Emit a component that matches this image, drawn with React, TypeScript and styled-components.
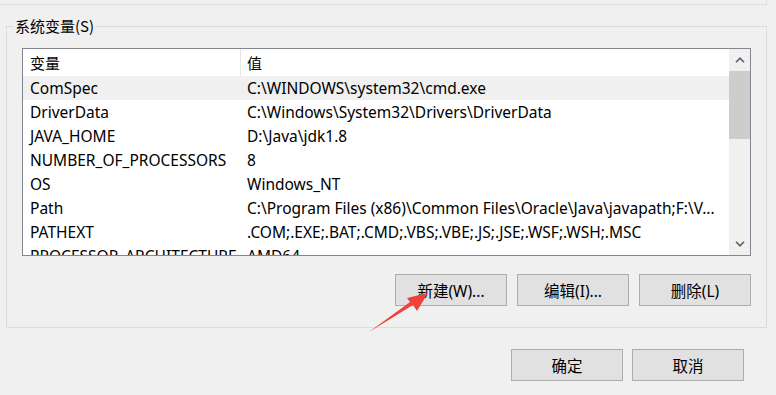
import React from 'react';
import styled, { createGlobalStyle } from 'styled-components';

const GlobalStyle = createGlobalStyle`
  html, body { margin: 0; padding: 0; background: #f0f0f0; }
  body { font-family: "Noto Sans", "Noto Sans CJK SC", sans-serif; }
  * { box-sizing: border-box; }
`;

const Page = styled.div`
  position: relative;
  width: 776px;
  height: 395px;
  overflow: hidden;
  background: #f0f0f0;
  display: flex;
  flex-direction: column;
  font-size: 15.5px;
  color: #000;
`;

const PrevGroup = styled.div`
  width: 767px;
  height: 5px;
  border-right: 1px solid #dcdcdc;
  border-bottom: 1px solid #dcdcdc;
`;

const Group = styled.section`
  position: relative;
  margin: 21px 0 0 6px;
  width: 761px;
  padding: 21px 15px 21px 15px;
  border: 1px solid #dcdcdc;
  display: flex;
  flex-direction: column;
  gap: 18px;
`;

const Legend = styled.span`
  position: absolute;
  top: -11px;
  left: 7px;
  padding: 0 1px;
  line-height: 20px;
  font-size: 15px;
  background: #f0f0f0;
  font-family: "Noto Sans CJK SC", sans-serif;
`;

const ListBox = styled.div`
  height: 208px;
  border: 1px solid #828790;
  background: #fff;
  display: flex;
  overflow: hidden;
`;

const ListContent = styled.div`
  flex: 1;
  overflow: hidden;
  display: flex;
  flex-direction: column;
`;

const Columns = styled.div<{ $header?: boolean; $selected?: boolean }>`
  display: grid;
  grid-template-columns: 218px 1fr;
  flex: none;
  height: ${(p) => (p.$header ? 27 : 24)}px;
  line-height: ${(p) => (p.$header ? 27 : 24)}px;
  background: ${(p) => (p.$selected ? '#f0f0f0' : '#fff')};
  white-space: nowrap;
`;

const HeaderCell = styled.div<{ $first?: boolean }>`
  padding-left: ${(p) => (p.$first ? 7 : 6)}px;
  font-family: "Noto Sans CJK SC", sans-serif;
  font-size: 15px;
  border-right: ${(p) => (p.$first ? '1px solid #e5e5e5' : 'none')};
  margin-bottom: 1px;
`;

const Cell = styled.div<{ $first?: boolean }>`
  padding-left: ${(p) => (p.$first ? 7 : 6)}px;
  overflow: hidden;
`;

const ScrollBar = styled.div`
  width: 21px;
  background: #f0f0f0;
  display: flex;
  flex-direction: column;
`;

const ArrowButton = styled.div`
  height: 22px;
  display: flex;
  align-items: center;
  justify-content: center;
  flex: none;
`;

const Thumb = styled.div`
  height: 68px;
  background: #cdcdcd;
  flex: none;
`;

const Track = styled.div`
  flex: 1;
`;

const ButtonRow = styled.div<{ $gap: number; $padRight?: number; $marginTop?: number }>`
  display: flex;
  justify-content: flex-end;
  gap: ${(p) => p.$gap}px;
  padding-right: ${(p) => p.$padRight ?? 0}px;
  margin-top: ${(p) => p.$marginTop ?? 0}px;
`;

const Button = styled.button`
  width: 112px;
  height: 32px;
  padding: 0;
  border: 1px solid #adadad;
  background: #e1e1e1;
  font-family: "Noto Sans", "Noto Sans CJK SC", sans-serif;
  font-size: 15.5px;
  color: #000;
  border-radius: 0;
`;

const Overlay = styled.svg`
  position: absolute;
  left: 0;
  top: 0;
  pointer-events: none;
`;

const rows: [string, string][] = [
  ['ComSpec', 'C:\\WINDOWS\\system32\\cmd.exe'],
  ['DriverData', 'C:\\Windows\\System32\\Drivers\\DriverData'],
  ['JAVA_HOME', 'D:\\Java\\jdk1.8'],
  ['NUMBER_OF_PROCESSORS', '8'],
  ['OS', 'Windows_NT'],
  ['Path', 'C:\\Program Files (x86)\\Common Files\\Oracle\\Java\\javapath;F:\\V...'],
  ['PATHEXT', '.COM;.EXE;.BAT;.CMD;.VBS;.VBE;.JS;.JSE;.WSF;.WSH;.MSC'],
  ['PROCESSOR_ARCHITECTURE', 'AMD64'],
];

const Chevron = ({ up }: { up?: boolean }) => (
  <svg width="10" height="6" viewBox="0 0 10 6">
    <path
      d={up ? 'M1 5.2 L5 1.2 L9 5.2' : 'M1 0.8 L5 4.8 L9 0.8'}
      fill="none"
      stroke="#606060"
      strokeWidth="1.6"
    />
  </svg>
);

export default function App() {
  return (
    <>
      <GlobalStyle />
      <Page>
        <PrevGroup />
        <Group>
          <Legend>系统变量(S)</Legend>
          <ListBox>
            <ListContent>
              <Columns $header>
                <HeaderCell $first>变量</HeaderCell>
                <HeaderCell>值</HeaderCell>
              </Columns>
              {rows.map(([k, v], i) => (
                <Columns key={k} $selected={i === 0}>
                  <Cell $first>{k}</Cell>
                  <Cell>{v}</Cell>
                </Columns>
              ))}
            </ListContent>
            <ScrollBar>
              <ArrowButton>
                <Chevron up />
              </ArrowButton>
              <Thumb />
              <Track />
              <ArrowButton>
                <Chevron />
              </ArrowButton>
            </ScrollBar>
          </ListBox>
          <ButtonRow $gap={10}>
            <Button>新建(W)...</Button>
            <Button>编辑(I)...</Button>
            <Button>删除(L)</Button>
          </ButtonRow>
        </Group>
        <ButtonRow $gap={9} $padRight={32} $marginTop={21}>
          <Button>确定</Button>
          <Button>取消</Button>
        </ButtonRow>
        <Overlay width="776" height="395" viewBox="0 0 776 395">
          <polygon
            points="369,332 413,305 417,311 428,293 407,298 410,302"
            fill="#ef4238"
          />
        </Overlay>
      </Page>
    </>
  );
}
